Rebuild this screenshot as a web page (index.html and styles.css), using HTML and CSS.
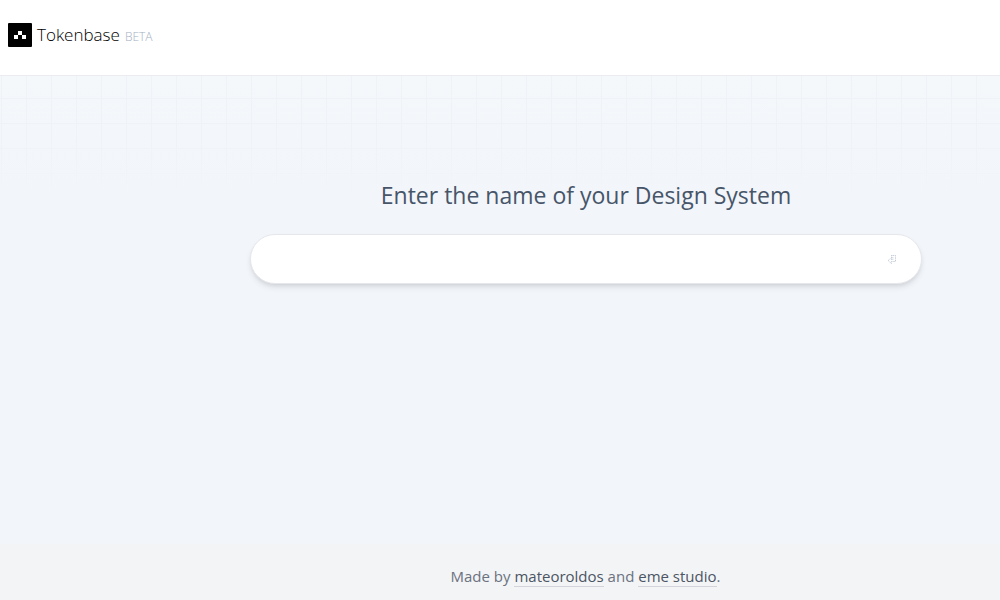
FILE: index.html
```
<!DOCTYPE html>
<html lang="en">
<head>
    <meta charset="UTF-8">
    <meta name="viewport" content="width=device-width, initial-scale=1.0">
    <title>Tokenbase</title>
    <link rel="stylesheet" href="styles.css">
</head>
<body>
    <header class="header">
        <svg class="logo" viewBox="0 0 24 24" aria-hidden="true">
            <rect width="24" height="24" rx="1" fill="#000"/>
            <path d="M10 8h4v4h-4zM6 12h4v4H6zM14 12h4v4h-4z" fill="#fff"/>
        </svg>
        <span class="brand">Tokenbase</span>
        <span class="beta">BETA</span>
    </header>

    <main class="main">
        <form class="name-form">
            <label class="title" for="system-name">Enter the name of your Design System</label>
            <div class="field">
                <input class="name-input" type="text" id="system-name">
                <svg class="enter-icon" viewBox="0 0 10 10" aria-hidden="true">
                    <path d="M4.500 1.500h4v6h-4v2L1.500 7v-1l3-2v1.500h1.500v-2h-1.500z"/>
                </svg>
            </div>
        </form>
    </main>

    <footer class="footer">
        <p class="credits">Made by <a class="link" href="#">mateoroldos</a> and <a class="link" href="#">eme studio</a>.</p>
    </footer>
</body>
</html>
```

FILE: styles.css
```
* {
    box-sizing: border-box;
}
body {
    margin: 0;
    min-height: 100vh;
    display: flex;
    flex-direction: column;
    font-family: "Segoe UI", "Open Sans", sans-serif;
    background-color: #f2f5fa;
}
.header {
    display: flex;
    align-items: center;
    height: 76px;
    padding: 0 8px 6px;
    background-color: #fff;
    border-bottom: 1px solid #ececf0;
}
.logo {
    width: 24px;
    height: 24px;
    margin-right: 5px;
}
.brand {
    font-size: 17px;
    font-weight: 300;
    line-height: 24px;
    color: #000;
}
.beta {
    margin: 4px 0 0 5px;
    font-size: 12px;
    font-weight: 300;
    line-height: 16px;
    color: #a3b1c2;
}
.main {
    flex: 1;
    padding: 103px 78px 0 250px;
    /* grid fades out towards the title */
    background-image:
        linear-gradient(to bottom, rgba(242, 245, 250, 0) 60px, #f2f5fa 120px),
        linear-gradient(to right, #eff2f6 1px, transparent 1px),
        linear-gradient(to bottom, #eff2f6 1px, transparent 1px),
        linear-gradient(to bottom, #f4f8fb, #f2f5fa 120px);
    background-size: 100% 100%, 25px 25px, 25px 25px, 100% 100%;
    background-position: 0 0, 1px 0, 0 -3px, 0 0;
}
.title {
    display: block;
    margin-bottom: 23px;
    font-size: 23px;
    line-height: 32px;
    text-align: center;
    color: #475569;
}
.field {
    display: flex;
    align-items: center;
    height: 50px;
    padding: 0 24px;
    background-color: #fff;
    border: 1px solid #e5e7eb;
    border-radius: 25px;
    box-shadow: 0 4px 6px -1px rgba(0, 0, 0, 0.1), 0 2px 4px -2px rgba(0, 0, 0, 0.1);
}
.name-input {
    flex: 1;
    min-width: 0;
    height: 32px;
    padding: 0;
    border: none;
    outline: none;
    background: transparent;
    font-family: inherit;
    font-size: 18px;
    color: #475569;
}
.enter-icon {
    width: 10px;
    height: 10px;
    fill: none;
    stroke: #94a3b8;
    stroke-width: 0.6;
    stroke-dasharray: 1 0.7;
}
.footer {
    height: 56px;
    padding: 22px 0 0 171px;
    background-color: #f3f4f6;
}
.credits {
    margin: 0;
    font-size: 15px;
    line-height: 20px;
    text-align: center;
    color: #6b7280;
}
.link {
    display: inline-block;
    color: #4b5563;
    text-decoration: none;
    border-bottom: 1px solid #d1d5db;
}
```
